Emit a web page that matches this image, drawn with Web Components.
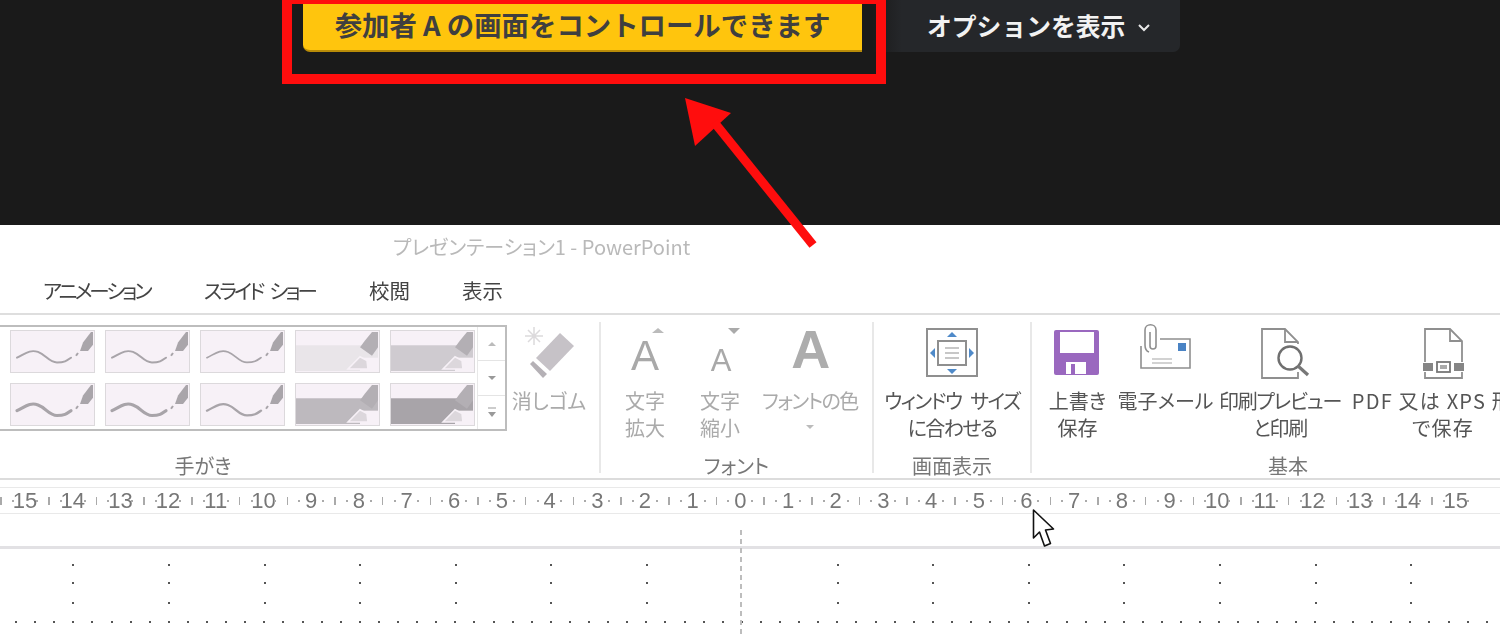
<!DOCTYPE html>
<html lang="ja">
<head>
<meta charset="utf-8">
<title>PowerPoint remote control</title>
<style>
  html, body { margin: 0; padding: 0; width: 1500px; height: 634px; overflow: hidden; background: #fff; }
  body { position: relative; font-family: "Noto Sans CJK JP", "Noto Sans", sans-serif; }
</style>
</head>
<body>
<control-bar></control-bar>
<ppt-window></ppt-window>
<callout-layer></callout-layer>

<script>
const JP = '"Noto Sans CJK JP", "Noto Sans", sans-serif';

class ControlBar extends HTMLElement {
  connectedCallback() {
    this.attachShadow({ mode: 'open' }).innerHTML = `
      <style>
        :host { display: flex; align-items: flex-start; height: 225px; background: #1a1a1a; padding-left: 303px; box-sizing: border-box; font-family: ${JP}; }
        .notice {
          width: 559px; height: 52px; box-sizing: border-box; background: #ffc50d;
          border-bottom: 2px solid #b98c08; border-radius: 0 0 0 7px;
          display: flex; align-items: center; justify-content: center;
          color: #3f3f3f; font-size: 27.4px; font-weight: 700; padding: 0 0 3px 0; white-space: pre;
        }
        .options {
          margin-left: 10px; width: 308px; height: 52px; box-sizing: border-box; border-radius: 0 0 7px 0;
          background: linear-gradient(90deg, #1a1a1a 0, #25272a 30px);
          display: flex; align-items: center; gap: 12px; padding: 0 0 3px 55px;
          color: #f2f2f2; font-size: 24.8px; font-weight: 700; white-space: nowrap;
        }
        svg { display: block; margin-top: 5px; }
      </style>
      <div class="notice">参加者 A の画面をコントロールできます</div>
      <div class="options">オプションを表示
        <svg width="14" height="9" viewBox="0 0 14 9"><path d="M2 2l5 5 5-5" fill="none" stroke="#e8e8e8" stroke-width="2"/></svg>
      </div>`;
  }
}
customElements.define('control-bar', ControlBar);

class PptWindow extends HTMLElement {
  connectedCallback() {
    this.attachShadow({ mode: 'open' }).innerHTML = `
      <style>
        :host { display: block; height: 409px; background: #fff; font-family: ${JP}; overflow: hidden; }
        .title { height: 46px; padding: 0 0 4px 393px; box-sizing: border-box; display: flex; align-items: center; font-size: 20px; color: #b9b9b9; font-feature-settings: "palt"; filter: blur(.4px); }
        .tabs { height: 42px; padding: 0 0 4px 43px; box-sizing: border-box; display: flex; align-items: center; font-size: 20.5px; color: #444; font-feature-settings: "palt"; filter: blur(.3px); }
        .tabs span:nth-child(1) { letter-spacing: -3px; margin-right: 54px; }
        .tabs span:nth-child(2) { letter-spacing: -2.9px; word-spacing: 5px; margin-right: 54px; }
        .tabs span:nth-child(3) { margin-right: 52px; }
      </style>
      <div class="title">プレゼンテーション1 - PowerPoint</div>
      <div class="tabs"><span>アニメーション</span><span>スライド ショー</span><span>校閲</span><span>表示</span></div>
      <ppt-ribbon></ppt-ribbon>
      <ppt-ruler></ppt-ruler>
      <slide-canvas></slide-canvas>`;
  }
}
customElements.define('ppt-window', PptWindow);

// one thumbnail of the ink gallery: wave stroke or highlighter band
class PenSwatch extends HTMLElement {
  connectedCallback() {
    const weight = this.getAttribute('weight');
    const band = this.getAttribute('band');
    const pen = '<path d="M69 21l3-9 8-11h3v12l-6 8z" fill="#a9a5aa"/>';
    const art = band
      ? `<rect x="0" y="15" width="82" height="28" fill="${band}"/><rect x="64" y="28" width="18" height="14" fill="#f7f1f7"/>
         <path d="M64 17l5-7 7-9h6v16l-6 9z" fill="#b3afb4"/><path d="M64 27l-12 13h20l-1-9z" fill="#dcd7dc" stroke="#f7f1f7" stroke-width="1.6"/>`
      : `<path d="M6 28C14 24 19 19 27 22S38 33 46 33 56 31 60 28" fill="none" stroke="#a8a4a9" stroke-width="${weight}" stroke-linecap="round"/>
         <path d="M65 26l2-3" stroke="#a8a4a9" stroke-width="2"/>${pen}`;
    this.attachShadow({ mode: 'open' }).innerHTML = `
      <style>
        :host { display: block; width: 85px; height: 43px; box-sizing: border-box; background: #f7f1f7; border: 1.5px solid #dcd9dc; }
        svg { display: block; width: 82px; height: 40px; }
      </style>
      <svg viewBox="0 0 82 42" preserveAspectRatio="none">${art}</svg>`;
  }
}
customElements.define('pen-swatch', PenSwatch);

class RibbonTool extends HTMLElement {
  connectedCallback() {
    const w = this.getAttribute('w');
    this.attachShadow({ mode: 'open' }).innerHTML = `
      <style>
        :host { display: flex; flex-direction: column; align-items: center; width: ${w}px; flex: none; white-space: nowrap; text-align: center; font-size: 20px; line-height: 27px; color: #555; font-feature-settings: "palt"; letter-spacing: ${this.getAttribute('ls') || 0}px; word-spacing: ${this.getAttribute('ws') || 0}px; }
        :host([off]) { color: #aaa; }
        .icon { height: 60px; width: 60px; margin: 0 0 5px; display: flex; justify-content: center; }
        .text { display: block; }
      </style>
      <div class="icon"><slot name="icon"></slot></div>
      <div class="text"><slot></slot></div>`;
  }
}
customElements.define('ribbon-tool', RibbonTool);

class RibbonGroup extends HTMLElement {
  connectedCallback() {
    const w = this.getAttribute('w');
    this.attachShadow({ mode: 'open' }).innerHTML = `
      <style>
        :host { display: flex; flex-direction: column; width: ${w}px; flex: none; box-sizing: border-box; border-right: 2px solid #e8e8e8; height: 151px; margin-top: 7px; }
        :host([last]) { border-right: 0; }
        .body { flex: 1; display: flex; padding-left: ${this.getAttribute('pad') || 0}px; min-height: 0; }
        .label { text-align: center; font-size: 20px; line-height: 27px; color: #777; margin-bottom: -6px; font-feature-settings: "palt"; ${this.getAttribute('labelstyle') || ''} }
      </style>
      <div class="body"><slot></slot></div>
      <div class="label">${this.getAttribute('label')}</div>`;
  }
}
customElements.define('ribbon-group', RibbonGroup);

class PptRibbon extends HTMLElement {
  connectedCallback() {
    const gray = '#8f8f8f';
    const swatches = [
      [2, 0], [2, 0], [1.8, 0], [0, '#e9e5e9'], [0, '#cfcbd0'],
      [3.2, 0], [3.2, 0], [2.4, 0], [0, '#bdb9be'], [0, '#a8a4a9']
    ].map(([wt, band]) => band ? `<pen-swatch band="${band}"></pen-swatch>` : `<pen-swatch weight="${wt}"></pen-swatch>`).join('');
    const tri = (d, c) => `<path d="${d}" fill="${c}"/>`;
    this.attachShadow({ mode: 'open' }).innerHTML = `
      <style>
        :host { display: flex; height: 167px; box-sizing: border-box; border-top: 2px solid #dedede; border-bottom: 2px solid #dcdcdc; overflow: hidden; filter: blur(.4px); }
        .gallery {
          width: 507px; height: 106px; margin-top: 3px; box-sizing: border-box; flex: none;
          border: 2px solid #bdbdbd; border-left: 0; display: flex; background: #fff;
        }
        .thumbs { flex: 1; display: grid; grid-template-columns: repeat(5, 85px); grid-auto-rows: 43px; gap: 10px 10px; padding: 3px 0 0 10px; }
        .scroll { width: 27px; flex: none; border-left: 1px solid #e8e8e8; display: flex; flex-direction: column; }
        .scroll div { flex: 1; display: flex; align-items: center; justify-content: center; border-bottom: 1px solid #e4e4e4; }
        .scroll div:last-child { border-bottom: 0; }
        .ink { display: flex; width: 100%; }
        svg { display: block; flex: none; overflow: visible; }
      </style>
      <ribbon-group w="601" label="手がき" labelstyle="padding-right: 193px;">
        <div class="ink">
          <div class="gallery">
            <div class="thumbs">${swatches}</div>
            <div class="scroll">
              <div><svg width="12" height="8">${tri('M6 2l4 4H2z', '#bbb')}</svg></div>
              <div><svg width="12" height="8">${tri('M2 2h8L6 6z', '#999')}</svg></div>
              <div><svg width="12" height="14"><path d="M2 3h8" stroke="#999"/>${tri('M2 7h8l-4 5z', '#999')}</svg></div>
            </div>
          </div>
          <ribbon-tool w="84" off>
            <svg slot="icon" width="60" height="60" viewBox="0 0 60 60">
              <path d="M15 5v18M6 14h18M9 8l12 12M21 8L9 20" stroke="#dcdadc" stroke-width="1.5"/>
              <path d="M41 11l14 13-24 25-14-13z" fill="#c6c2c7"/>
              <path d="M14 39l14 13-4 4-13-14z" fill="#b5b1b6"/>
            </svg>
            消しゴム
          </ribbon-tool>
        </div>
      </ribbon-group>
      <ribbon-group w="273" pad="9" label="フォント">
        <ribbon-tool w="70" off>
          <svg slot="icon" width="60" height="60" viewBox="0 0 60 60">${tri('M43 6l6 5H37z', '#bbb')}
            <text x="30" y="48" text-anchor="middle" font-family="Liberation Sans" font-size="42" fill="#a9a9a9">A</text></svg>
          文字<br>拡大
        </ribbon-tool>
        <ribbon-tool w="80" off>
          <svg slot="icon" width="60" height="60" viewBox="0 0 60 60">${tri('M38 6h12l-6 6z', '#aaa')}
            <text x="31" y="49" text-anchor="middle" font-family="Liberation Sans" font-size="31" fill="#a9a9a9">A</text></svg>
          文字<br>縮小
        </ribbon-tool>
        <ribbon-tool w="100" ls="-1.5" off>
          <svg slot="icon" width="60" height="60" viewBox="0 0 60 60">
            <text x="30" y="46" text-anchor="middle" font-family="Liberation Sans" font-weight="700" font-size="54" fill="#adadad">A</text></svg>
          フォントの色<br><svg width="12" height="27" viewBox="0 0 12 27" style="margin:auto">${tri('M2 11h8l-4 4z', '#bbb')}</svg>
        </ribbon-tool>
      </ribbon-group>
      <ribbon-group w="158" label="画面表示">
        <ribbon-tool w="156" ls="-1.6" ws="6">
          <svg slot="icon" width="60" height="60" viewBox="0 0 60 60">
            <rect x="5" y="7" width="50" height="47" fill="#fff" stroke="${gray}" stroke-width="2"/>
            <rect x="16" y="19" width="28" height="24" fill="#fff" stroke="${gray}" stroke-width="2"/>
            <path d="M23 26h14M23 31h14M23 36h14" stroke="#b5b5b5" stroke-width="1.4"/>
            ${tri('M30 10l5 5H25z', '#4f8ac9')}${tri('M25 47h10l-5 5z', '#4f8ac9')}${tri('M8 31l5-5v10z', '#4f8ac9')}${tri('M52 31l-5-5v10z', '#4f8ac9')}
          </svg>
          ウィンドウ サイズ<br>に合わせる
        </ribbon-tool>
      </ribbon-group>
      <ribbon-group w="468" pad="9" last label="基本" labelstyle="padding-left: 44px;">
        <ribbon-tool w="73">
          <svg slot="icon" width="60" height="60" viewBox="0 0 60 60">
            <rect x="6" y="8" width="45" height="45" rx="2" fill="#9a68bf"/>
            <rect x="12" y="10" width="34" height="21" fill="#fff"/>
            <rect x="18" y="40" width="20" height="12" fill="#fff"/>
            <rect x="23" y="42" width="4" height="10" fill="#9a68bf"/>
          </svg>
          上書き<br>保存
        </ribbon-tool>
        <ribbon-tool w="103">
          <svg slot="icon" width="60" height="60" viewBox="0 0 60 60">
            <path d="M24 17h30v29H5V24" fill="#fff" stroke="${gray}" stroke-width="1.6"/>
            <path d="M13 30c-3-1-4-3-4-7V8c0-7 11-7 11 0v16c0 4-6 4-6 0V10" fill="#fff" stroke="${gray}" stroke-width="1.6"/>
            <rect x="42" y="21" width="8" height="8" fill="#4a83c4"/>
            <path d="M16 37h20M16 41h20" stroke="#c4c4c4" stroke-width="1.4"/>
          </svg>
          電子メール
        </ribbon-tool>
        <ribbon-tool w="126" ls="-1.3">
          <svg slot="icon" width="60" height="60" viewBox="0 0 60 60">
            <path d="M48 22v-2L35 7H12v49h36v-6" fill="#fff" stroke="${gray}" stroke-width="1.8"/>
            <path d="M35 7v13h13" fill="none" stroke="${gray}" stroke-width="1.8"/>
            <circle cx="40" cy="36" r="11.500" fill="#fff" stroke="#6f6f6f" stroke-width="2.400"/>
            <path d="M48 44l10 9" stroke="#777" stroke-width="3.200"/>
          </svg>
          印刷プレビュー<br>と印刷
        </ribbon-tool>
        <ribbon-tool w="200" ls="1.2">
          <svg slot="icon" width="60" height="60" viewBox="0 0 60 60">
            <path d="M12 40V7h25l12 12v21M12 50v6h37v-6" fill="#fff" stroke="${gray}" stroke-width="1.8"/>
            <path d="M37 7v12h12" fill="none" stroke="${gray}" stroke-width="1.8"/>
            <rect x="10" y="41" width="10" height="8" fill="#858585"/><rect x="41" y="41" width="10" height="8" fill="#858585"/>
            <rect x="24" y="40" width="13" height="10" fill="#fff" stroke="#777" stroke-width="1.8"/><rect x="27" y="43" width="7" height="4" fill="#aaa"/>
          </svg>
          PDF 又は XPS 形式<br>で保存
        </ribbon-tool>
      </ribbon-group>`;
  }
}
customElements.define('ppt-ribbon', PptRibbon);

class PptRuler extends HTMLElement {
  connectedCallback() {
    let cells = '';
    for (let n = 15; n >= -15; n--) {
      cells += `<div class="cell"><i class="tick"></i><i class="dot"></i><span>${Math.abs(n)}</span><i class="dot"></i></div>`;
    }
    this.attachShadow({ mode: 'open' }).innerHTML = `
      <style>
        :host { display: flex; height: 27px; box-sizing: border-box; margin-top: 7px; border-top: 1.5px solid #e9e9e9; border-bottom: 1.5px solid #e9e9e9; overflow: hidden; filter: blur(.35px); }
        .row { display: flex; margin-left: -4.8px; flex: none; }
        .cell { width: 47.7px; flex: none; display: flex; justify-content: space-around; align-items: center; }
        .cell > * { width: 0; display: flex; justify-content: center; }
        span { font: 22px/24px "Liberation Sans", sans-serif; color: #777; padding-top: 1px; }
        i.tick::before { content: ""; flex: none; width: 1.5px; height: 8px; background: #aaa; }
        i.dot::before { content: ""; flex: none; width: 2px; height: 2px; background: #aaa; }
      </style>
      <div class="row">${cells}</div>`;
  }
}
customElements.define('ppt-ruler', PptRuler);

class SlideCanvas extends HTMLElement {
  connectedCallback() {
    const cols = [72, 168, 264, 359, 455, 550, 646, 837, 932, 1028, 1123, 1219, 1315, 1410];
    let dots = '';
    for (const x of cols) {
      for (const y of [15, 33, 53]) dots += `<rect x="${x}" y="${y}" width="2" height="2"/>`;
    }
    for (let i = 0; i < 78; i++) {
      dots += `<rect x="${Math.round(15 + i * 19.1)}" y="72" width="2" height="2"/>`;
    }
    this.attachShadow({ mode: 'open' }).innerHTML = `
      <style>
        :host { display: block; margin-top: 32px; border-top: 3px solid #e2e1e4; }
        svg { display: block; }
      </style>
      <svg width="1500" height="85" viewBox="0 0 1500 85" fill="#555">
        ${dots}
      </svg>`;
  }
}
customElements.define('slide-canvas', SlideCanvas);

// annotations and mouse pointer lying over the screenshot
class CalloutLayer extends HTMLElement {
  connectedCallback() {
    this.attachShadow({ mode: 'open' }).innerHTML = `
      <style>
        :host { position: absolute; left: 0; top: 0; width: 1500px; height: 634px; pointer-events: none; }
        svg { display: block; }
      </style>
      <svg width="1500" height="634" viewBox="0 0 1500 634">
        <path d="M741 530V634" stroke="#bdbdbd" stroke-width="2" stroke-dasharray="5 4"/>
        <rect x="287" y="-1" width="594" height="80" fill="none" stroke="#ff0d0d" stroke-width="10"/>
        <path d="M685 98l46 15-36 33z" fill="#ff0d0d"/>
        <path d="M714 122l99 123" stroke="#ff0d0d" stroke-width="9"/>
        <path d="M1033.500 510v28l6-6 5 14 6-2.500-5-13.500 8-1z" fill="#fff" stroke="#111" stroke-width="1.600" stroke-linejoin="round"/>
      </svg>`;
  }
}
customElements.define('callout-layer', CalloutLayer);
</script>
</body>
</html>
